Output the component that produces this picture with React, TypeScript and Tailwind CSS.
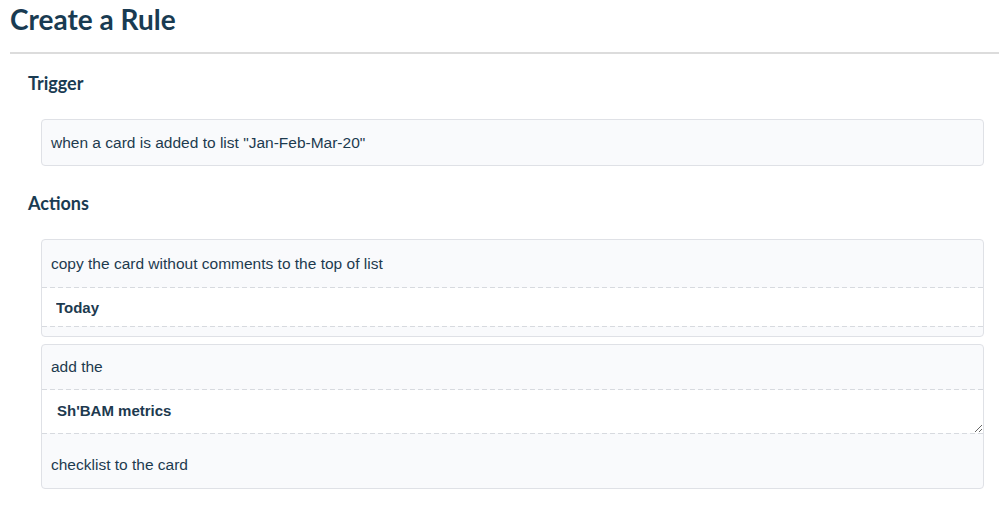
import React from 'react';

const heading = { fontFamily: 'Lato, "Liberation Sans", sans-serif' };
const body = { fontFamily: '"Liberation Sans", Arial, sans-serif' };

// dashed separator line, 5px dash / 3px gap
const Dash = () => (
  <div className="h-px w-full bg-[repeating-linear-gradient(90deg,#d7dadf_0_5px,transparent_5px_8px)]" />
);

const App = () => {
  return (
    <div className="w-[999px] h-[505px] bg-white text-[#1d3a4f] overflow-hidden" style={body}>
      {/* Title */}
      <div className="pl-[10px] pt-[2px]">
        <h1 className="text-[28px] leading-[34px] font-bold text-[#193b52]" style={heading}>
          Create a Rule
        </h1>
        <div className="mt-[16px] border-t-2 border-[#dcdcdc]" />
      </div>

      {/* Trigger */}
      <h2 className="mt-[18px] pl-[28px] text-[18px] leading-[22px] font-bold text-[#193b52]" style={heading}>
        Trigger
      </h2>
      <div className="mt-[25px] ml-[41px] w-[943px] h-[47px] flex items-center px-[9px] bg-[#f9fafc] border border-[#dfe1e6] rounded-[4px] text-[15.5px]">
        when a card is added to list "Jan-Feb-Mar-20"
      </div>

      {/* Actions */}
      <h2 className="mt-[26px] pl-[28px] text-[18px] leading-[22px] font-bold text-[#193b52]" style={heading}>
        Actions
      </h2>
      <div className="mt-[25px] ml-[41px] w-[943px] flex flex-col gap-[7px]">
        <div className="bg-[#f9fafc] border border-[#dfe1e6] rounded-[4px] pb-[9px] text-[15.5px]">
          <div className="h-[47px] flex items-center px-[9px]">copy the card without comments to the top of list</div>
          <Dash />
          <input
            readOnly
            defaultValue="Today"
            className="block w-full h-[38px] bg-white px-[14px] font-bold text-[15px] text-[#1d3a4f] outline-none"
            style={body}
          />
          <Dash />
        </div>
        <div className="bg-[#f9fafc] border border-[#dfe1e6] rounded-[4px] text-[15.5px]">
          <div className="h-[44px] flex items-center px-[9px]">add the</div>
          <Dash />
          <textarea
            readOnly
            rows={1}
            defaultValue="Sh'BAM metrics"
            className="block w-full h-[43px] bg-white px-[15px] pt-[12px] leading-[18px] font-bold text-[15px] text-[#1d3a4f] outline-none resize-y"
            style={body}
          />
          <Dash />
          <div className="h-[54px] flex items-center pt-[8px] px-[9px]">checklist to the card</div>
        </div>
      </div>
    </div>
  );
};

export default App;
